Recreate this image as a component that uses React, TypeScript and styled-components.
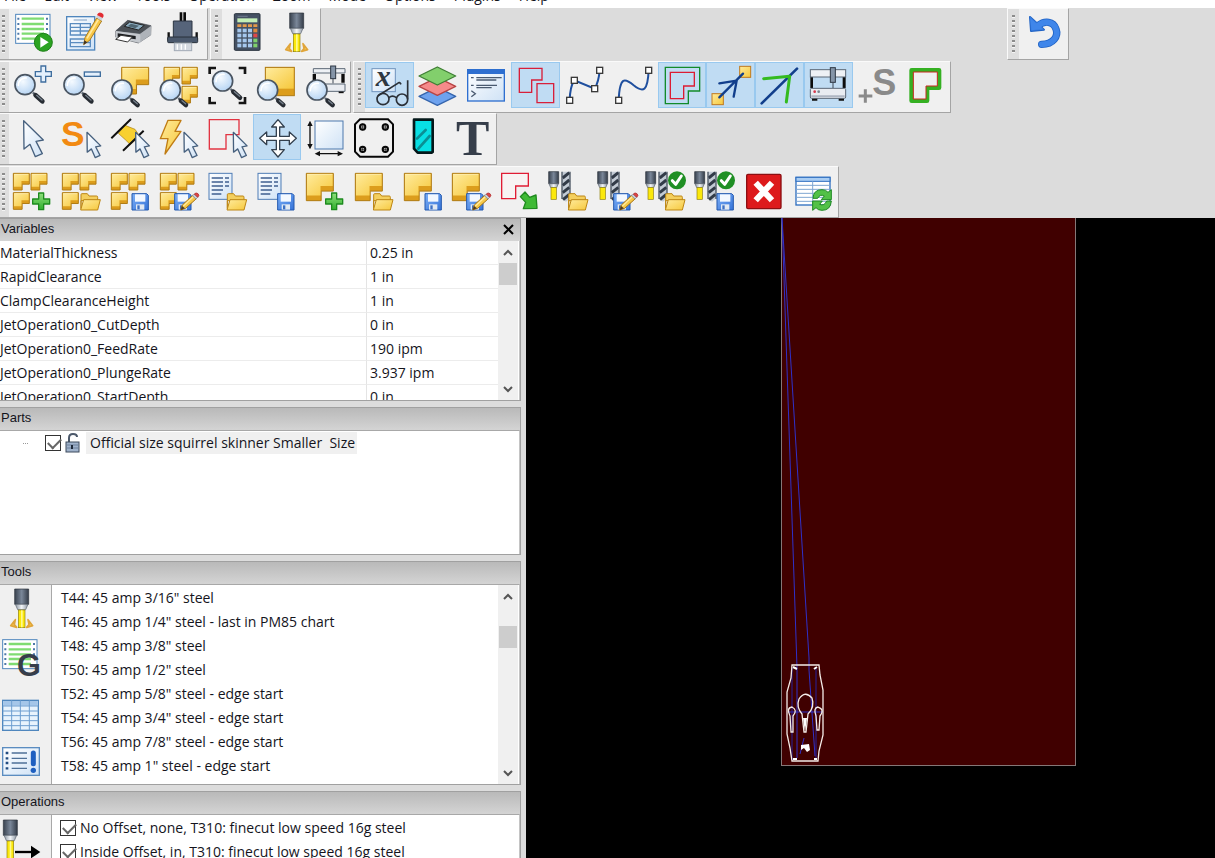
import React from 'react';
import styled, { createGlobalStyle } from 'styled-components';

const GlobalStyle = createGlobalStyle`
  * { box-sizing: border-box; }
  body {
    margin: 0;
    overflow: hidden;
    background: #dcdcdc;
    font: 14px/24px "Open Sans", "Noto Sans", sans-serif;
    color: #14141c;
  }
  button { font: inherit; color: inherit; }
`;

const Window = styled.div`
  display: flex;
  flex-direction: column;
  height: 100vh;
`;

const MenuBar = styled.nav`
  display: flex;
  flex: none;
  align-items: flex-end;
  gap: 18px;
  height: 8px;
  padding-left: 4px;
  overflow: hidden;
  background: #fff;
`;

const MenuItem = styled.button`
  padding: 0;
  border: 0;
  background: none;
  font-size: 14px;
  line-height: 24px;
`;

const ToolArea = styled.header`
  display: flex;
  flex: none;
  flex-direction: column;
  justify-content: space-between;
  height: 210px;
  background: #dcdcdc;
`;

const ToolRow = styled.div`
  display: flex;
  gap: 2px;
  height: 52px;
`;

const Bar = styled.div<{ $width: number; $end?: boolean; $first?: boolean }>`
  display: flex;
  flex: none;
  align-items: flex-start;
  width: ${(p) => p.$width}px;
  margin-left: ${(p) => (p.$end ? 'auto' : '0')};
  margin-right: ${(p) => (p.$end ? '12%' : '0')};
  background: #f0f0f0;
  border-top: 1px solid #fafafa;
  border-bottom: 1px solid #a4a4a4;
  border-right: 1px solid #a4a4a4;
  border-left: ${(p) => (p.$first ? '0' : '1px solid #fafafa')};
`;

const Grip = styled.span<{ $first?: boolean }>`
  flex: none;
  width: ${(p) => (p.$first ? 9 : 11)}px;
  height: 100%;
  background: #dedede;
  padding: 6px 0 6px ${(p) => (p.$first ? 2 : 4)}px;

  &::before {
    content: '';
    display: block;
    width: 3px;
    height: 100%;
    background: repeating-linear-gradient(#8c8c8c 0 2px, #f4f4f4 2px 3px, #dedede 3px 5px);
  }
`;

const ToolButton = styled.button<{ $on?: boolean }>`
  display: flex;
  flex: 1 1 0;
  align-items: center;
  justify-content: center;
  min-width: 0;
  height: 46px;
  padding: 2px 0 0;
  border: 1px solid ${(p) => (p.$on ? '#99c9ef' : 'transparent')};
  background: ${(p) => (p.$on ? '#c0dcf3' : 'transparent')};
`;

const Glyph = styled.svg`
  flex: none;
  width: 40px;
  height: 40px;
  overflow: visible;
`;

const Workspace = styled.main`
  display: flex;
  flex: 1;
  min-height: 0;
`;

const Dock = styled.aside`
  display: flex;
  flex: none;
  flex-direction: column;
  gap: 6px;
  width: 526px;
  padding-right: 5px;
  background: #dcdcdc;
  overflow: hidden;
`;

const Panel = styled.section<{ $height: number }>`
  display: flex;
  flex: none;
  flex-direction: column;
  height: ${(p) => p.$height}px;
  border: 1px solid #a0a0a0;
  border-left: 0;
`;

const PanelTitle = styled.h2`
  display: flex;
  flex: none;
  align-items: center;
  justify-content: space-between;
  height: 22px;
  margin: 0;
  padding: 0 6px 2px 1px;
  background: linear-gradient(#b9b9b9, #d4d4d4);
  font: 13px/20px "Liberation Sans", Arial, sans-serif;
`;

const CloseButton = styled.button`
  display: flex;
  padding: 0;
  border: 0;
  background: none;
`;

const PanelBody = styled.div<{ $lined?: boolean }>`
  display: flex;
  flex: 1;
  min-height: 0;
  background: #fff;
  overflow: hidden;
  border-top: ${(p) => (p.$lined ? '1px solid #a8a8a8' : '0')};
  border-right: 1px solid #c4c4c4;
`;

const VariableTable = styled.table`
  flex: 1;
  align-self: flex-start;
  border-collapse: separate;
  border-spacing: 0;
  table-layout: fixed;
`;

const Cell = styled.td`
  height: 24px;
  padding: 0 0 0 3px;
  line-height: 23px;
  border-bottom: 1px solid #ececec;
  border-left: 1px solid #e4e4e4;
  white-space: nowrap;
`;

const NameCell = styled.th`
  width: 366px;
  height: 24px;
  padding: 0;
  line-height: 23px;
  font-weight: 400;
  text-align: left;
  border-bottom: 1px solid #ececec;
  white-space: nowrap;
`;

const ScrollTrack = styled.div`
  display: flex;
  flex: none;
  flex-direction: column;
  align-items: center;
  width: 20px;
  margin-right: 1px;
  background: #f0f0f0;
`;

const ScrollButton = styled.button`
  display: flex;
  align-items: center;
  justify-content: center;
  width: 100%;
  height: 22px;
  padding: 0;
  border: 0;
  background: none;
`;

const ScrollThumb = styled.div<{ $gap: number }>`
  width: 18px;
  height: 22px;
  margin-top: ${(p) => p.$gap}px;
  margin-bottom: auto;
  background: #cdcdcd;
`;

const SideStrip = styled.div`
  display: flex;
  flex: none;
  flex-direction: column;
  gap: 18px;
  width: 52px;
  padding: 4px 0 0 1px;
  background: #f0f0f0;
  border-right: 1px solid #a8a8a8;
`;

const SideGroup = styled.div`
  display: flex;
  flex-direction: column;
  align-items: flex-start;
  gap: 8px;
`;

const SideButton = styled.button`
  display: flex;
  padding: 0;
  border: 0;
  background: none;
`;

const ItemList = styled.ul<{ $flush?: boolean }>`
  flex: 1;
  min-width: 0;
  margin: 0;
  padding: ${(p) => (p.$flush ? 0 : 1)}px 0 0 8px;
  list-style: none;
  white-space: pre;
`;

const ToolItem = styled.li`
  height: 24px;
  padding-left: 1px;
`;

const CheckItem = styled.li<{ $indent?: number }>`
  display: flex;
  align-items: center;
  gap: 4px;
  height: 24px;
  padding-left: ${(p) => p.$indent ?? 0}px;
`;

const Check = styled.input`
  flex: none;
  appearance: none;
  width: 16px;
  height: 16px;
  margin: 0;
  border: 1px solid #333;
  background: #fff;

  &:checked::after {
    content: '';
    display: block;
    width: 11px;
    height: 6px;
    margin: 2px 0 0 2px;
    border-left: 2px solid #666;
    border-bottom: 2px solid #666;
    transform: rotate(-45deg);
  }
`;

const PartLabel = styled.label`
  margin-left: 2px;
  padding: 0 2px 0 4px;
  line-height: 22px;
  background: #f0f0f0;
`;

const TreeStub = styled.span`
  width: 5px;
  margin-right: 13px;
  border-top: 1px dotted #999;
`;

const Viewport = styled.div`
  flex: 1;
  min-width: 0;
  background: #000;
  overflow: hidden;
`;

const Drawing = styled.svg`
  display: block;
  width: 100%;
  height: 100%;
`;

const Hidden = styled.svg`
  position: absolute;
  width: 0;
  height: 0;
`;

function Gradients() {
  return (
    <Hidden aria-hidden="true">
      <defs>
        <linearGradient id="gold" x1="0" y1="0" x2="1" y2="1">
          <stop offset="0" stopColor="#ffeb9c" />
          <stop offset="1" stopColor="#f6c83c" />
        </linearGradient>
        <linearGradient id="paper" x1="0" y1="0" x2="1" y2="1">
          <stop offset="0" stopColor="#ffffff" />
          <stop offset="1" stopColor="#cfe2f6" />
        </linearGradient>
        <linearGradient id="steel" x1="0" y1="0" x2="1" y2="0">
          <stop offset="0" stopColor="#39424f" />
          <stop offset="0.5" stopColor="#7a8799" />
          <stop offset="1" stopColor="#343c48" />
        </linearGradient>
        <linearGradient id="chrome" x1="0" y1="0" x2="1" y2="0">
          <stop offset="0" stopColor="#8c96a2" />
          <stop offset="0.5" stopColor="#f2f5f8" />
          <stop offset="1" stopColor="#8c96a2" />
        </linearGradient>
        <linearGradient id="blueDisk" x1="0" y1="0" x2="1" y2="1">
          <stop offset="0" stopColor="#7db0f7" />
          <stop offset="1" stopColor="#3573d8" />
        </linearGradient>
        <linearGradient id="leaf" x1="0" y1="0" x2="0" y2="1">
          <stop offset="0" stopColor="#8fe07c" />
          <stop offset="1" stopColor="#2fae2c" />
        </linearGradient>
        <radialGradient id="lens" cx="0.4" cy="0.35" r="0.7">
          <stop offset="0" stopColor="#f5faff" />
          <stop offset="1" stopColor="#b4d3f3" />
        </radialGradient>
      </defs>
    </Hidden>
  );
}

/* ---------- pieces shared by several icons (120-unit grid) ---------- */

type At = { x?: number; y?: number };

const Lens = ({ x = 0, y = 0, k = 1 }: At & { k?: number }) => (
  <g transform={`translate(${x} ${y})`}>
    <path d={`M24 24 L${33 * k} ${33 * k}`} stroke="#5a6470" strokeWidth="7" />
    <path d={`M32 32 L${52 * k} ${50 * k}`} stroke="#272c33" strokeWidth="14" strokeLinecap="round" />
    <path d={`M35 32 L${51 * k} ${46 * k}`} stroke="#76808c" strokeWidth="4" strokeLinecap="round" />
    <circle r="30" fill="url(#lens)" stroke="#4a5562" strokeWidth="5" />
    <path d="M-20 2 A21 21 0 0 1 4 -20" fill="none" stroke="#fff" strokeWidth="5" strokeLinecap="round" />
  </g>
);

/* An L-shaped sheet with a darker bottom edge */
const Ell = ({ x = 0, y = 0, w = 48, h = 50 }: At & { w?: number; h?: number }) => {
  const mx = w * 0.55;
  const my = h * 0.46;
  const d = h * 0.19;
  return (
    <g transform={`translate(${x} ${y})`} strokeLinejoin="round">
      <path d={`M0 0H${w}V${my + d}H${mx}V${h}H0Z`} fill="#dc9d1c" stroke="#b07c14" strokeWidth="3" />
      <path d={`M2 2H${w - 2}V${my}H${mx - 2}V${h - d}H2Z`} fill="url(#gold)" />
      <path d={`M3 3H${w - 3}`} stroke="#fff3c0" strokeWidth="2" />
    </g>
  );
};

const ThreeElls = () => (
  <>
    <Ell x={1} y={7} />
    <Ell x={54} y={7} />
    <Ell x={1} y={65} />
  </>
);

const Plus = ({ x = 0, y = 0 }: At) => (
  <path
    transform={`translate(${x} ${y})`}
    d="M20 2H35V20H53V35H35V52H20V35H2V20H20Z"
    fill="url(#leaf)"
    stroke="#1d8a1e"
    strokeWidth="4"
    strokeLinejoin="round"
  />
);

const Folder = ({ x = 0, y = 0 }: At) => (
  <g transform={`translate(${x} ${y})`} stroke="#bd8614" strokeWidth="3" strokeLinejoin="round">
    <path d="M3 46V4Q3 1 6 1H22L27 8H50Q53 8 53 12V22H3Z" fill="#f4cf5e" />
    <path d="M2 50L11 19H61L53 50Z" fill="url(#gold)" />
  </g>
);

const Disk = ({ x = 0, y = 0 }: At) => (
  <g transform={`translate(${x} ${y})`}>
    <path d="M2 1H46L51 6V50H2Z" fill="url(#blueDisk)" stroke="#2358ae" strokeWidth="3" strokeLinejoin="round" />
    <rect x="11" y="3" width="31" height="22" fill="#f3f8ff" />
    <rect x="14" y="33" width="25" height="16" fill="#e2e9f2" />
    <rect x="18" y="36" width="7" height="12" fill="#3c70c4" />
  </g>
);

const Pencil = ({ x = 0, y = 0 }: At) => (
  <g transform={`translate(${x} ${y})`}>
    <path d="M0 52L5 37L36 8L47 18L15 47Z" fill="#f7c948" stroke="#a87414" strokeWidth="3" strokeLinejoin="round" />
    <path d="M8 40L38 12" stroke="#ffeaa0" strokeWidth="4" />
    <path d="M0 52L4 40L13 47Z" fill="#4a3a28" />
    <path d="M35 9L41 4L51 14L46 19Z" fill="#c9ced6" stroke="#7e858f" strokeWidth="2" />
    <path d="M41 4Q46 -2 52 3Q58 8 51 14Z" fill="#e04545" stroke="#a42424" strokeWidth="2" />
  </g>
);

const Sheet = () => (
  <g>
    <rect x="3" y="7" width="69" height="78" fill="url(#paper)" stroke="#4f7db5" strokeWidth="3" />
    <path d="M11 21H45M11 33H45M11 45H45M11 57H45M11 69H40M51 21H63M51 33H63M51 45H63" stroke="#3f5f90" strokeWidth="4" />
  </g>
);

const Cursor = ({ x = 0, y = 0, k = 1 }: At & { k?: number }) => (
  <path
    transform={`translate(${x} ${y}) scale(${k})`}
    d="M0 0L59 58L37 62L56 99L35 108L19 71L1 85Z"
    fill="url(#paper)"
    stroke="#46607e"
    strokeWidth={4 / k}
    strokeLinejoin="round"
  />
);

const Torch = ({ x = 0, y = 0, sparks = true }: At & { sparks?: boolean }) => (
  <g transform={`translate(${x} ${y})`}>
    <path d="M41 0H83V46H41Z" fill="url(#steel)" stroke="#2a313b" strokeWidth="2" />
    <path d="M43 46H81L74 62H50Z" fill="url(#chrome)" stroke="#59626e" strokeWidth="2" />
    <rect x="52" y="63" width="20" height="53" fill="#fbe80c" stroke="#8f7f0a" strokeWidth="2" />
    <rect x="60" y="64" width="5" height="51" fill="#fff98e" />
    {sparks && (
      <path
        d="M43 92L29 110L47 115L40 107ZM81 92L95 110L77 115L84 107Z"
        fill="#f8cb55"
        stroke="#e0a53a"
        strokeWidth="5"
        strokeLinejoin="round"
      />
    )}
  </g>
);

const TorchAndDrill = () => (
  <g>
    <path d="M-4 2H26V38H-4Z" fill="url(#steel)" stroke="#2a313b" strokeWidth="2" />
    <path d="M-3 38H25L20 50H2Z" fill="url(#chrome)" stroke="#59626e" strokeWidth="2" />
    <rect x="3" y="50" width="16" height="35" fill="#fbe80c" stroke="#8f7f0a" strokeWidth="2" />
    <path d="M36 2H60V82L48 92L36 84Z" fill="#c3cbd5" />
    <path d="M38 21L58 5M38 43L58 27M38 65L58 49M39 86L58 70" stroke="#323b48" strokeWidth="9" />
    <path d="M36 2V84M60 2V84" stroke="#4a5462" strokeWidth="4" />
  </g>
);

const Tick = () => (
  <g>
    <circle cx="90" cy="28" r="27" fill="#1f8f24" />
    <path d="M76 29L86 40L103 15" fill="none" stroke="#fff" strokeWidth="9" strokeLinecap="round" strokeLinejoin="round" />
  </g>
);

const Machine = ({ x = 0, y = 0 }: At) => (
  <g transform={`translate(${x} ${y})`}>
    <rect x="7" y="30" width="8" height="36" fill="#0c0c0c" />
    <rect x="104" y="30" width="9" height="36" fill="#0c0c0c" />
    <rect x="7" y="11" width="106" height="22" fill="#eef1f5" stroke="#5c6876" strokeWidth="3" />
    <rect x="7" y="67" width="106" height="30" rx="4" fill="#e9ecf1" stroke="#5c6876" strokeWidth="3" />
    <path d="M10 91H110" stroke="#aeb6c2" strokeWidth="6" />
    <path d="M12 101H28M92 101H108" stroke="#111" strokeWidth="6" />
    <rect x="67" y="5" width="15" height="44" fill="#8595a8" stroke="#2d3744" strokeWidth="3" />
    <path d="M75 49V66" stroke="#3c4754" strokeWidth="3" />
    <circle cx="20" cy="77" r="4" fill="#d8364a" />
    <circle cx="32" cy="77" r="4" fill="#7a848f" />
  </g>
);

const Listing = ({ y = 0 }: At) => (
  <g transform={`translate(0 ${y})`}>
    <rect x="5" y="4" width="103" height="87" fill="#fff" stroke="#4f86bd" strokeWidth="3" />
    <path d="M23 17H90M23 33H90M23 48H90M23 62H90M23 77H90" stroke="#7fdc72" strokeWidth="7" />
    <path d="M10 17H16M10 33H16M10 48H16M10 62H16M10 77H16M96 17H102M96 33H102M96 48H102" stroke="#4d78a8" strokeWidth="6" />
  </g>
);

const Node = ({ x, y }: { x: number; y: number }) => (
  <rect x={x - 9} y={y - 9} width="18" height="18" fill="#fff" stroke="#3a3a3a" strokeWidth="4" />
);

/* ---------- the icons ---------- */

const icons: Record<string, React.ReactNode> = {
  run: (
    <>
      <Listing />
      <circle cx="88" cy="88" r="27" fill="#2ba321" stroke="#1d7f18" strokeWidth="3" />
      <path d="M79 72L104 88L79 104Z" fill="#fff" />
    </>
  ),
  edit: (
    <>
      <rect x="11" y="11" width="84" height="100" fill="url(#paper)" stroke="#4f86bd" strokeWidth="4" />
      <path d="M32 21H72" stroke="#7c9cc0" strokeWidth="3" />
      <path d="M22 32H82V66H22ZM22 43H82M22 54H82M52 32V66M22 78H82V101H22ZM22 89H82" fill="none" stroke="#5a8cc0" strokeWidth="4" />
      <path d="M62 95L66 74L101 15L116 24L80 82Z" fill="#f9c847" stroke="#a77a20" strokeWidth="3" strokeLinejoin="round" />
      <path d="M72 76L106 20" stroke="#ffe9a0" strokeWidth="5" />
      <path d="M62 95L64 82L73 88Z" fill="#3b3129" />
      <path d="M99 13L103 6L119 15L115 23Z" fill="#ccd2da" />
      <path d="M102 6Q106 -5 116 0Q126 5 119 15Z" fill="#e22c33" />
    </>
  ),
  print: (
    <>
      <path d="M8 54L44 22L114 38L113 66L76 90L8 72Z" fill="#8d9299" stroke="#54585e" strokeWidth="2" />
      <path d="M8 54L44 22L114 38L82 62Z" fill="#4b5056" />
      <path d="M34 40L50 27L94 37L76 51Z" fill="#8fb0c4" stroke="#222" strokeWidth="3" />
      <path d="M44 40L54 32L78 38L67 46Z" fill="#4e6673" />
      <path d="M82 62L114 40V65L78 90Z" fill="#aeb3b9" />
      <path d="M8 54L82 64V90L8 74Z" fill="#c4c8cd" />
      <path d="M14 61L68 69V79L14 71Z" fill="#1b1d20" />
      <path d="M8 79L24 67L58 72L44 87Z" fill="#fff" stroke="#333" strokeWidth="3" />
    </>
  ),
  post: (
    <>
      <path d="M57 -2V28M68 -2V28" stroke="#0b0b0b" strokeWidth="8" />
      <path d="M34 24H90V74H34Z" fill="#56647a" stroke="#2c3542" strokeWidth="3" />
      <path d="M20 58V80M104 58V80" stroke="#111" strokeWidth="7" />
      <rect x="17" y="72" width="90" height="17" rx="3" fill="#4b596d" stroke="#28303b" strokeWidth="3" />
      <rect x="37" y="90" width="52" height="23" fill="#d4d9df" stroke="#a2abb6" strokeWidth="3" />
      <path d="M46 94V110M58 94V110M70 94V110" stroke="#fff" strokeWidth="4" />
    </>
  ),
  calc: (
    <>
      <rect x="22" y="2" width="77" height="110" rx="3" fill="#455163" stroke="#27303c" strokeWidth="3" />
      <rect x="31" y="16" width="60" height="12" fill="#c4efb6" />
      <path d="M32 10H62" stroke="#6f7b8d" strokeWidth="3" />
      {[0, 1, 2, 3].map((r) =>
        [0, 1, 2, 3].map((c) => (
          <rect
            key={`${r}-${c}`}
            x={31 + c * 16}
            y={47 + r * 15}
            width="12"
            height="11"
            fill={c === 3 ? (r === 0 ? '#e08a3c' : r === 1 ? '#e04848' : '#7fd26c') : '#a6c8ee'}
          />
        )),
      )}
      <path d="M31 38H91" stroke="#e39a4a" strokeWidth="8" strokeDasharray="12 4" />
    </>
  ),
  torch: <Torch y={0} />,
  undo: (
    <g fill="none" strokeLinecap="round" strokeLinejoin="round">
      <path d="M53 94C88 94 104 70 96 48C88 24 62 22 42 38" stroke="#1f62c4" strokeWidth="22" />
      <path d="M18 12L21 54L60 50Z" fill="#1f62c4" stroke="#1f62c4" strokeWidth="6" />
      <path d="M53 94C88 94 104 70 96 48C88 24 62 22 42 38" stroke="#3f86ea" strokeWidth="17" />
      <path d="M19 14L22 52L57 49Z" fill="#3f86ea" stroke="#3f86ea" strokeWidth="2" />
    </g>
  ),
  zoomIn: (
    <>
      <Lens x={36} y={56} />
      <path d="M84 0H98V17H115V31H98V48H84V31H67V17H84Z" fill="#e4f0fc" stroke="#3f6e9e" strokeWidth="4" />
    </>
  ),
  zoomOut: (
    <>
      <Lens x={36} y={56} />
      <rect x="67" y="18" width="48" height="13" fill="#e4f0fc" stroke="#3f6e9e" strokeWidth="4" />
    </>
  ),
  zoomPart: (
    <>
      <Ell x={32} y={4} w={81} h={80} />
      <Lens x={33} y={72} k={0.9} />
    </>
  ),
  zoomParts: (
    <>
      <Ell x={12} y={4} w={47} />
      <Ell x={66} y={4} w={46} />
      <Ell x={66} y={61} w={46} />
      <Lens x={31} y={72} k={0.9} />
    </>
  ),
  zoomFit: (
    <>
      <path d="M5 24V6H24M92 6H111V24M5 93V111H24M92 111H111V93" fill="none" stroke="#151515" strokeWidth="8" />
      <Lens x={44} y={45} />
    </>
  ),
  zoomSheet: (
    <>
      <rect x="25" y="4" width="87" height="85" fill="#dc9d1c" stroke="#b07c14" strokeWidth="3" />
      <rect x="27" y="6" width="83" height="62" fill="url(#gold)" />
      <Lens x={32} y={72} k={0.9} />
    </>
  ),
  zoomMachine: (
    <>
      <path d="M22 8H117V21H22Z" fill="#eef1f5" stroke="#5c6876" strokeWidth="3" />
      <path d="M25 24V48M111 24V50" stroke="#0c0c0c" strokeWidth="10" />
      <path d="M30 54H117V76H30Z" fill="#e9ecf1" stroke="#5c6876" strokeWidth="3" />
      <path d="M98 79H113" stroke="#111" strokeWidth="5" />
      <rect x="74" y="0" width="15" height="38" fill="#8595a8" stroke="#2d3744" strokeWidth="3" />
      <path d="M81 38V52" stroke="#3c4754" strokeWidth="3" />
      <Lens x={33} y={72} k={0.9} />
    </>
  ),
  variables: (
    <>
      <rect x="9" y="8" width="70" height="69" fill="url(#paper)" stroke="#6f93bd" strokeWidth="3" />
      <text x="20" y="60" fontFamily="Liberation Serif, serif" fontStyle="italic" fontWeight="700" fontSize="90" fill="#2f3842">
        x
      </text>
      <g fill="none" stroke="#2b3037" strokeWidth="5">
        <ellipse cx="42" cy="99" rx="18" ry="17" />
        <ellipse cx="99" cy="101" rx="17" ry="17" />
        <path d="M60 95Q70 86 82 95M26 90L86 52Q92 46 96 55M116 100V43" />
      </g>
    </>
  ),
  layers: (
    <g strokeWidth="4" strokeLinejoin="round">
      <path d="M3 91L58 64L113 91L58 118Z" fill="#6ea2ee" stroke="#3565ad" />
      <path d="M3 61L58 34L113 61L58 88Z" fill="#f58a8a" stroke="#b84444" />
      <path d="M3 30L58 3L113 30L58 57Z" fill="#82cf6c" stroke="#3f7f35" />
    </g>
  ),
  console: (
    <>
      <rect x="2" y="11" width="110" height="94" fill="url(#paper)" stroke="#2f6fd0" strokeWidth="4" />
      <rect x="2" y="11" width="110" height="13" fill="#2f6fd0" />
      <path d="M28 35H104M28 42H88M28 58H90M28 65H74" stroke="#4a5a70" strokeWidth="4" />
      <path d="M12 35H20M12 58H20" stroke="#4a5a70" strokeWidth="4" />
      <path d="M13 74L25 83L13 92" fill="none" stroke="#4a5a70" strokeWidth="4" />
    </>
  ),
  shapes: (
    <path d="M10 7H78V42H47V79H10ZM63 53H113V110H63Z" fill="none" stroke="#d81f3a" strokeWidth="4" />
  ),
  polyline: (
    <>
      <path d="M17 103Q18 62 31 43L92 68Q104 48 107 13" fill="none" stroke="#1f4f9e" strokeWidth="6" />
      <Node x={17} y={103} />
      <Node x={31} y={43} />
      <Node x={92} y={68} />
      <Node x={107} y={13} />
    </>
  ),
  spline: (
    <>
      <path d="M17 103C20 30 36 36 62 58C92 82 104 74 107 13" fill="none" stroke="#1f4f9e" strokeWidth="6" />
      <Node x={17} y={103} />
      <Node x={107} y={13} />
    </>
  ),
  outline: (
    <>
      <path d="M10 4H113V75H79V113H10Z" fill="none" stroke="#128a2a" strokeWidth="4" />
      <path d="M25 19H97V60H65V98H25Z" fill="none" stroke="#dc1c34" strokeWidth="4" />
    </>
  ),
  direction: (
    <>
      <rect x="86" y="1" width="33" height="33" fill="url(#gold)" stroke="#c07a1e" strokeWidth="3" />
      <rect x="3" y="83" width="34" height="33" fill="url(#gold)" stroke="#c07a1e" strokeWidth="3" />
      <path d="M25 94L96 23M25 52L77 44L68 92" fill="none" stroke="#123f8c" strokeWidth="7" strokeLinecap="round" />
    </>
  ),
  toolpath: (
    <>
      <path d="M8 112L114 8" stroke="#123f8c" strokeWidth="8" strokeLinecap="round" />
      <path d="M14 38L92 31L82 108" fill="none" stroke="#34bb20" strokeWidth="9" strokeLinecap="round" strokeLinejoin="round" />
    </>
  ),
  machine: <Machine />,
  plusS: (
    <>
      <text x="46" y="88" fontFamily="Liberation Sans, sans-serif" fontWeight="700" fontSize="108" fill="#8a8a8a">
        S
      </text>
      <path d="M5 90H46M25 70V110" stroke="#8a8a8a" strokeWidth="9" />
    </>
  ),
  greenPart: (
    <>
      <path d="M17 13H99V65H63V104H17Z" fill="#f0f0f0" stroke="#35b022" strokeWidth="14" strokeLinejoin="round" />
      <path d="M22 18H94V60H60V99H22Z" fill="#f0f0f0" stroke="#c8281e" strokeWidth="3" />
    </>
  ),
  select: <Cursor x={32} y={8} />,
  selectStart: (
    <>
      <text x="-3" y="83" fontFamily="Liberation Sans, sans-serif" fontWeight="700" fontSize="106" fill="#f28a12">
        S
      </text>
      <Cursor x={75} y={43} k={0.7} />
    </>
  ),
  selectTab: (
    <>
      <path d="M42 22L72 34L86 54L58 80L44 66L22 46Z" fill="#f8d030" stroke="#a97c10" strokeWidth="2" />
      <path d="M1 61L60 3M36 98L98 38" stroke="#111" strokeWidth="6" />
      <Cursor x={74} y={43} k={0.7} />
    </>
  ),
  selectRapid: (
    <>
      <path d="M27 7H66L48 40H66L18 108L27 62H4Z" fill="url(#gold)" stroke="#c07c14" strokeWidth="4" strokeLinejoin="round" />
      <Cursor x={75} y={43} k={0.7} />
    </>
  ),
  selectContour: (
    <>
      <path d="M4 5H93V50H54V93H4Z" fill="none" stroke="#e23442" strokeWidth="4" />
      <Cursor x={76} y={43} k={0.7} />
    </>
  ),
  move: (
    <path
      d="M63 5L82 27H68V55H97V42L118 61L97 80V67H68V95H82L63 117L44 95H58V67H29V80L8 61L29 42V55H58V27H44Z"
      fill="#fff"
      stroke="#33404e"
      strokeWidth="4"
      strokeLinejoin="round"
    />
  ),
  size: (
    <>
      <rect x="27" y="9" width="84" height="84" fill="url(#paper)" stroke="#4d79ad" strokeWidth="3" />
      <path d="M12 16V88M33 107H104" stroke="#111" strokeWidth="4" />
      <path d="M12 8L20 24H4ZM12 94L20 78H4ZM26 107L42 99V115ZM111 107L95 99V115Z" fill="#111" />
    </>
  ),
  plate: (
    <g fill="none" stroke="#080808" strokeWidth="6">
      <path d="M18 4H102L117 19V101L102 116H18L3 101V19Z" />
      <circle cx="26" cy="27" r="8" />
      <circle cx="94" cy="27" r="8" />
      <circle cx="26" cy="94" r="8" />
      <circle cx="94" cy="94" r="8" />
      <path d="M16 27H36M84 27H104M16 94H36M84 94H104M26 17V37M94 17V37M26 84V104M94 84V104" strokeWidth="2" />
    </g>
  ),
  material: (
    <>
      <path d="M33 5H89V102L86 104H44L33 92Z" fill="#08e0e4" stroke="#04181a" strokeWidth="8" strokeLinejoin="round" />
      <path d="M42 62L68 36M46 92L80 54" stroke="#0a8f94" strokeWidth="8" strokeLinecap="round" />
    </>
  ),
  text: (
    <text x="12" y="112" fontFamily="Liberation Serif, serif" fontWeight="700" fontSize="150" fill="#363e4a">
      T
    </text>
  ),
  jobNew: (
    <>
      <ThreeElls />
      <Plus x={57} y={64} />
    </>
  ),
  jobOpen: (
    <>
      <ThreeElls />
      <Folder x={54} y={67} />
    </>
  ),
  jobSave: (
    <>
      <ThreeElls />
      <Disk x={61} y={67} />
    </>
  ),
  jobSaveAs: (
    <>
      <ThreeElls />
      <Disk x={42} y={67} />
      <Pencil x={62} y={65} />
    </>
  ),
  sheetOpen: (
    <>
      <Sheet />
      <Folder x={55} y={67} />
    </>
  ),
  sheetSave: (
    <>
      <Sheet />
      <Disk x={60} y={67} />
    </>
  ),
  partNew: (
    <>
      <Ell x={1} y={7} w={81} h={82} />
      <Plus x={57} y={64} />
    </>
  ),
  partOpen: (
    <>
      <Ell x={1} y={7} w={81} h={82} />
      <Folder x={53} y={67} />
    </>
  ),
  partSave: (
    <>
      <Ell x={1} y={7} w={81} h={82} />
      <Disk x={61} y={67} />
    </>
  ),
  partSaveAs: (
    <>
      <Ell x={1} y={7} w={81} h={82} />
      <Disk x={42} y={67} />
      <Pencil x={62} y={65} />
    </>
  ),
  importPart: (
    <>
      <path d="M2 7H82V45H44V83H2Z" fill="#f7f3f3" stroke="#e01c34" strokeWidth="4" />
      <path d="M58 77L72 63L86 79L105 72L108 112L67 113L74 94Z" fill="#3fba35" stroke="#1f8a1e" strokeWidth="4" strokeLinejoin="round" />
    </>
  ),
  toolsOpen: (
    <>
      <TorchAndDrill />
      <Folder x={53} y={67} />
    </>
  ),
  toolsSaveAs: (
    <>
      <TorchAndDrill />
      <Disk x={42} y={67} />
      <Pencil x={62} y={65} />
    </>
  ),
  defaultsOpen: (
    <>
      <TorchAndDrill />
      <Folder x={53} y={67} />
      <Tick />
    </>
  ),
  defaultsSave: (
    <>
      <TorchAndDrill />
      <Disk x={61} y={67} />
      <Tick />
    </>
  ),
  close: (
    <>
      <rect x="5" y="10" width="103" height="103" rx="4" fill="#dd1a1c" stroke="#8c0f12" strokeWidth="4" />
      <path d="M32 35L81 88M81 35L32 88" stroke="#fff" strokeWidth="18" />
    </>
  ),
  refresh: (
    <>
      <rect x="6" y="19" width="102" height="83" fill="#fff" stroke="#2f6fc0" strokeWidth="4" />
      <rect x="6" y="19" width="102" height="12" fill="#a9cdf3" stroke="#2f6fc0" strokeWidth="3" />
      <path d="M6 43H108M6 55H108M6 67H108M6 79H108M6 91H108M56 31V102" stroke="#7fa6d2" strokeWidth="3" />
      <g fill="#52c147" stroke="#1f8a24" strokeWidth="3" strokeLinejoin="round">
        <path d="M57 82Q58 56 84 56Q96 56 102 64L112 56V86H82L91 75Q78 68 71 82Z" />
        <path d="M112 90Q110 118 84 118Q72 118 66 110L56 118V90H85L77 100Q91 106 98 90Z" />
      </g>
    </>
  ),
  gcode: (
    <>
      <Listing y={4} />
      <text x="48" y="117" fontFamily="Liberation Sans, sans-serif" fontWeight="700" fontSize="92" fill="#363e4a">
        G
      </text>
    </>
  ),
  grid: (
    <>
      <rect x="5" y="16" width="107" height="90" fill="#e8f3fd" stroke="#4f86bd" strokeWidth="4" />
      <rect x="7" y="18" width="103" height="14" fill="#a5c6e9" />
      <path d="M5 33H112M5 48H112M5 62H112M5 77H112M5 92H112M32 16V106M58 16V106M85 16V106" stroke="#6e9ed0" strokeWidth="3" />
    </>
  ),
  notes: (
    <>
      <rect x="5" y="14" width="110" height="83" fill="url(#paper)" stroke="#5b8cc0" strokeWidth="4" />
      <path d="M32 30H78M32 46H78M32 60H78M32 76H78" stroke="#4e7098" strokeWidth="4" />
      <path d="M14 30H22M14 46H22M14 60H22M14 76H22" stroke="#234c80" strokeWidth="7" />
      <path d="M97 30V62" stroke="#1e5fc0" strokeWidth="15" strokeLinecap="round" />
      <circle cx="97" cy="82" r="8" fill="#1e5fc0" />
    </>
  ),
  jet: (
    <>
      <Torch x={-34} y={3} sparks={false} />
      <path d="M42 99H95" stroke="#000" strokeWidth="7" />
      <path d="M90 80L118 99L90 118Z" fill="#000" />
    </>
  ),
};

const Icon = ({ name }: { name: string }) => (
  <Glyph viewBox="0 0 120 120" aria-hidden="true">
    {icons[name]}
  </Glyph>
);

type BarSpec = { width: number; first?: boolean; end?: boolean; items: string[]; on?: string[] };

const rows: BarSpec[][] = [
  [
    { width: 208, first: true, items: ['run', 'edit', 'print', 'post'] },
    { width: 111, items: ['calc', 'torch'] },
    { width: 62, end: true, items: ['undo'] },
  ],
  [
    {
      width: 351,
      first: true,
      items: ['zoomIn', 'zoomOut', 'zoomPart', 'zoomParts', 'zoomFit', 'zoomSheet', 'zoomMachine'],
    },
    {
      width: 598,
      items: [
        'variables', 'layers', 'console', 'shapes', 'polyline', 'spline',
        'outline', 'direction', 'toolpath', 'machine', 'plusS', 'greenPart',
      ],
      on: ['variables', 'shapes', 'outline', 'direction', 'toolpath', 'machine'],
    },
  ],
  [
    {
      width: 497,
      first: true,
      items: [
        'select', 'selectStart', 'selectTab', 'selectRapid', 'selectContour',
        'move', 'size', 'plate', 'material', 'text',
      ],
      on: ['move'],
    },
  ],
  [
    {
      width: 839,
      first: true,
      items: [
        'jobNew', 'jobOpen', 'jobSave', 'jobSaveAs', 'sheetOpen', 'sheetSave', 'partNew', 'partOpen', 'partSave',
        'partSaveAs', 'importPart', 'toolsOpen', 'toolsSaveAs', 'defaultsOpen', 'defaultsSave', 'close', 'refresh',
      ],
    },
  ],
];

const menus = ['File', 'Edit', 'View', 'Tools', 'Operation', 'Zoom', 'Mode', 'Options', 'Plugins', 'Help'];

const variables = [
  ['MaterialThickness', '0.25 in'],
  ['RapidClearance', '1 in'],
  ['ClampClearanceHeight', '1 in'],
  ['JetOperation0_CutDepth', '0 in'],
  ['JetOperation0_FeedRate', '190 ipm'],
  ['JetOperation0_PlungeRate', '3.937 ipm'],
  ['JetOperation0_StartDepth', '0 in'],
];

const tools = [
  'T44: 45 amp 3/16" steel',
  'T46: 45 amp 1/4" steel - last in PM85 chart',
  'T48: 45 amp 3/8" steel',
  'T50: 45 amp 1/2" steel',
  'T52: 45 amp 5/8" steel - edge start',
  'T54: 45 amp 3/4" steel - edge start',
  'T56: 45 amp 7/8" steel - edge start',
  'T58: 45 amp 1" steel - edge start',
];

const operations = [
  'No Offset, none, T310: finecut low speed 16g steel',
  'Inside Offset, in, T310: finecut low speed 16g steel',
];

function Scrollbar({ gap }: { gap: number }) {
  return (
    <ScrollTrack>
      <ScrollButton aria-label="Scroll up">
        <svg width="10" height="7" viewBox="0 0 10 7">
          <path d="M1 6L5 2L9 6" fill="none" stroke="#555" strokeWidth="2" />
        </svg>
      </ScrollButton>
      <ScrollThumb $gap={gap} />
      <ScrollButton aria-label="Scroll down">
        <svg width="10" height="7" viewBox="0 0 10 7">
          <path d="M1 1L5 5L9 1" fill="none" stroke="#555" strokeWidth="2" />
        </svg>
      </ScrollButton>
    </ScrollTrack>
  );
}

function PartDrawing() {
  return (
    <Drawing aria-label="Part drawing">
      <rect x="255.5" y="-1.5" width="294" height="549" fill="#400000" stroke="#857878" />
      <g fill="none" stroke="#3030c8">
        <path d="M256 0L271 450V540M256 0L283 440V452L289 538M262 494H297" />
        <path d="M266 450V542M290 450V542" stroke="#28209a" />
        <path d="M278 520L274 536" />
      </g>
      <g fill="none" stroke="#f4ece8" strokeWidth="1.3">
        <path d="M266 447H293L294 457L297 472V517L293 533L292 543H266L264 530L261 516V474L265 460Z" />
        <path d="M276 496Q270 489 273 481Q279 472 286 480Q289 489 282 496L280 514H278Z" />
        <path d="M264 498Q260 490 266 489Q272 492 267 498V514H265ZM290 498Q287 490 292 489Q299 491 294 498L293 512H291Z" />
      </g>
      <path d="M277 500L279 514L281 500ZM275 527L283 526L284 532L281 534L278 530L275 532Z" fill="#fff" />
      <path d="M267 449L271 451M288 451L291 449M267 541H271M288 541H291" stroke="#fff" strokeWidth="2" />
    </Drawing>
  );
}

export default function App() {
  return (
    <Window>
      <GlobalStyle />
      <Gradients />
      <MenuBar>
        {menus.map((m) => (
          <MenuItem key={m}>{m}</MenuItem>
        ))}
      </MenuBar>
      <ToolArea>
        {rows.map((bars, r) => (
          <ToolRow key={r}>
            {bars.map((bar) => (
              <Bar key={bar.items[0]} $width={bar.width} $end={bar.end} $first={bar.first} role="toolbar">
                <Grip $first={bar.first} />
                {bar.items.map((name) => (
                  <ToolButton key={name} $on={bar.on?.includes(name)} aria-label={name}>
                    <Icon name={name} />
                  </ToolButton>
                ))}
              </Bar>
            ))}
          </ToolRow>
        ))}
      </ToolArea>
      <Workspace>
        <Dock>
          <Panel $height={183}>
            <PanelTitle>
              Variables
              <CloseButton aria-label="Close">
                <svg width="11" height="11" viewBox="0 0 11 11">
                  <path d="M1 1L10 10M10 1L1 10" stroke="#000" strokeWidth="2" />
                </svg>
              </CloseButton>
            </PanelTitle>
            <PanelBody>
              <VariableTable>
                <tbody>
                  {variables.map(([name, value]) => (
                    <tr key={name}>
                      <NameCell scope="row">{name}</NameCell>
                      <Cell>{value}</Cell>
                    </tr>
                  ))}
                </tbody>
              </VariableTable>
              <Scrollbar gap={0} />
            </PanelBody>
          </Panel>

          <Panel $height={148}>
            <PanelTitle>Parts</PanelTitle>
            <PanelBody $lined>
              <ItemList $flush>
                <CheckItem $indent={15}>
                  <TreeStub />
                  <Check type="checkbox" id="part-0" defaultChecked />
                  <svg width="15" height="20" viewBox="0 0 15 20" aria-hidden="true">
                    <path d="M4 10V5Q4 1 8 1Q12 1 12 4" fill="none" stroke="#4b586a" strokeWidth="2" />
                    <rect x="1" y="9" width="13" height="10" fill="#9fb2cb" stroke="#3d4a5c" />
                    <path d="M2 12H13M2 15H13" stroke="#6d809b" />
                    <path d="M7 12V16" stroke="#1f2a3a" strokeWidth="2" />
                  </svg>
                  <PartLabel htmlFor="part-0">{'Official size squirrel skinner Smaller  Size'}</PartLabel>
                </CheckItem>
              </ItemList>
            </PanelBody>
          </Panel>

          <Panel $height={224}>
            <PanelTitle>Tools</PanelTitle>
            <PanelBody $lined>
              <SideStrip>
                <SideGroup>
                  <SideButton aria-label="Add tool"><Icon name="torch" /></SideButton>
                  <SideButton aria-label="Add code"><Icon name="gcode" /></SideButton>
                </SideGroup>
                <SideGroup>
                  <SideButton aria-label="Tool table"><Icon name="grid" /></SideButton>
                  <SideButton aria-label="Tool notes"><Icon name="notes" /></SideButton>
                </SideGroup>
              </SideStrip>
              <ItemList>
                {tools.map((t) => (
                  <ToolItem key={t}>{t}</ToolItem>
                ))}
              </ItemList>
              <Scrollbar gap={19} />
            </PanelBody>
          </Panel>

          <Panel $height={160}>
            <PanelTitle>Operations</PanelTitle>
            <PanelBody $lined>
              <SideStrip>
                <SideGroup>
                  <SideButton aria-label="Add jet operation"><Icon name="jet" /></SideButton>
                </SideGroup>
              </SideStrip>
              <ItemList>
                {operations.map((t, i) => (
                  <CheckItem key={t}>
                    <Check type="checkbox" id={`op-${i}`} defaultChecked />
                    <label htmlFor={`op-${i}`}>{t}</label>
                  </CheckItem>
                ))}
              </ItemList>
            </PanelBody>
          </Panel>
        </Dock>
        <Viewport>
          <PartDrawing />
        </Viewport>
      </Workspace>
    </Window>
  );
}
